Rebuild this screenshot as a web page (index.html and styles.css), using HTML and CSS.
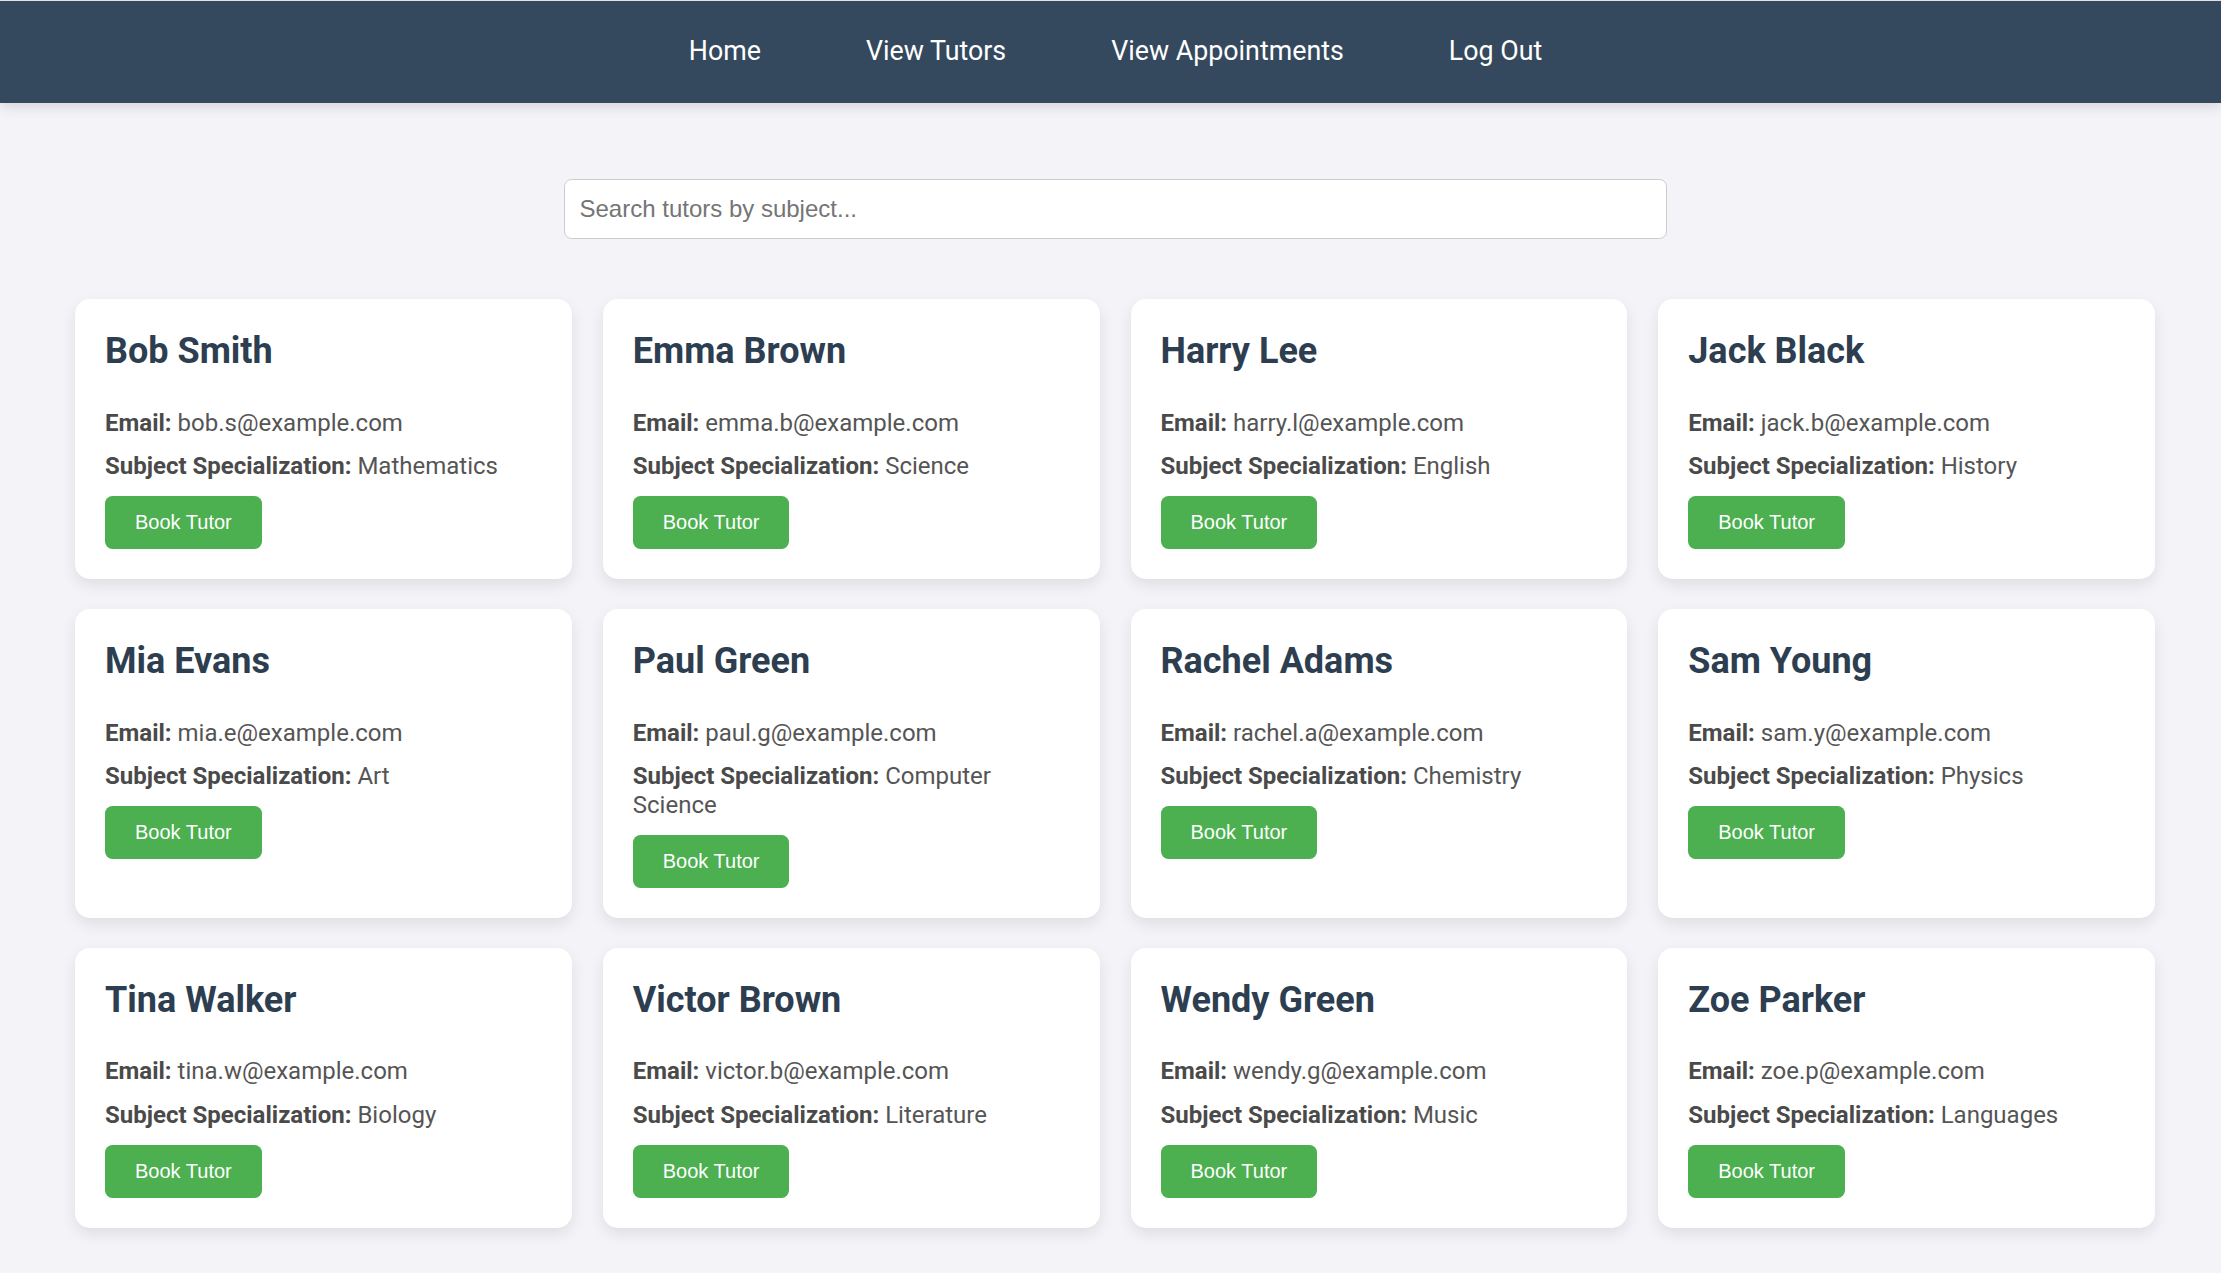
FILE: index.html
```html
<!DOCTYPE html>
<html lang="en">
<head>
<meta charset="utf-8">
<title>View Tutors</title>
<link rel="stylesheet" href="styles.css">
</head>
<body>
<nav class="topnav">
  <div class="nav-inner">
    <a class="nav-link" href="#">Home</a>
    <a class="nav-link" href="#">View Tutors</a>
    <a class="nav-link" href="#">View Appointments</a>
    <a class="nav-link" href="#">Log Out</a>
  </div>
</nav>
<main class="main">
  <div class="search-wrap">
    <input class="search" type="text" placeholder="Search tutors by subject...">
  </div>
  <section class="grid">
    <div class="card"><h2 class="name">Bob Smith</h2><p class="info"><strong>Email:</strong> bob.s@example.com</p><p class="info"><strong>Subject Specialization:</strong> Mathematics</p><button class="book">Book Tutor</button></div>
    <div class="card"><h2 class="name">Emma Brown</h2><p class="info"><strong>Email:</strong> emma.b@example.com</p><p class="info"><strong>Subject Specialization:</strong> Science</p><button class="book">Book Tutor</button></div>
    <div class="card"><h2 class="name">Harry Lee</h2><p class="info"><strong>Email:</strong> harry.l@example.com</p><p class="info"><strong>Subject Specialization:</strong> English</p><button class="book">Book Tutor</button></div>
    <div class="card"><h2 class="name">Jack Black</h2><p class="info"><strong>Email:</strong> jack.b@example.com</p><p class="info"><strong>Subject Specialization:</strong> History</p><button class="book">Book Tutor</button></div>
    <div class="card"><h2 class="name">Mia Evans</h2><p class="info"><strong>Email:</strong> mia.e@example.com</p><p class="info"><strong>Subject Specialization:</strong> Art</p><button class="book">Book Tutor</button></div>
    <div class="card"><h2 class="name">Paul Green</h2><p class="info"><strong>Email:</strong> paul.g@example.com</p><p class="info"><strong>Subject Specialization:</strong> Computer Science</p><button class="book">Book Tutor</button></div>
    <div class="card"><h2 class="name">Rachel Adams</h2><p class="info"><strong>Email:</strong> rachel.a@example.com</p><p class="info"><strong>Subject Specialization:</strong> Chemistry</p><button class="book">Book Tutor</button></div>
    <div class="card"><h2 class="name">Sam Young</h2><p class="info"><strong>Email:</strong> sam.y@example.com</p><p class="info"><strong>Subject Specialization:</strong> Physics</p><button class="book">Book Tutor</button></div>
    <div class="card"><h2 class="name">Tina Walker</h2><p class="info"><strong>Email:</strong> tina.w@example.com</p><p class="info"><strong>Subject Specialization:</strong> Biology</p><button class="book">Book Tutor</button></div>
    <div class="card"><h2 class="name">Victor Brown</h2><p class="info"><strong>Email:</strong> victor.b@example.com</p><p class="info"><strong>Subject Specialization:</strong> Literature</p><button class="book">Book Tutor</button></div>
    <div class="card"><h2 class="name">Wendy Green</h2><p class="info"><strong>Email:</strong> wendy.g@example.com</p><p class="info"><strong>Subject Specialization:</strong> Music</p><button class="book">Book Tutor</button></div>
    <div class="card"><h2 class="name">Zoe Parker</h2><p class="info"><strong>Email:</strong> zoe.p@example.com</p><p class="info"><strong>Subject Specialization:</strong> Languages</p><button class="book">Book Tutor</button></div>
  </section>
</main>
</body>
</html>
```

FILE: styles.css
```css
* { box-sizing: border-box; }

html, body {
  margin: 0;
  padding: 0;
}

body {
  background: #f4f4f8;
  font-family: Roboto, "Liberation Sans", Arial, sans-serif;
  border-top: 1px solid #e2e2e4;
}

.topnav {
  background: #34495e;
  height: 102px;
  box-shadow: 0 4px 12px rgba(0, 0, 0, 0.12);
  position: relative;
}

.nav-inner {
  height: 100%;
  display: flex;
  align-items: center;
  justify-content: center;
  gap: 105px;
  padding-left: 10px;
  padding-bottom: 2px;
}

.nav-link {
  color: #ffffff;
  text-decoration: none;
  font-family: Roboto, sans-serif;
  font-size: 26.8px;
}

.main {
  padding: 0 66px 60px 75px;
}

.search-wrap {
  display: flex;
  justify-content: center;
  padding-top: 76px;
}

.search {
  width: 1103px;
  height: 60px;
  padding: 15px;
  font-family: "Liberation Sans", Arial, sans-serif;
  font-size: 24px;
  border: 1.5px solid #cccccc;
  border-radius: 7.5px;
  background: #ffffff;
  color: #333;
  outline: none;
}

.search::placeholder {
  color: #757575;
}

.grid {
  display: grid;
  grid-template-columns: repeat(4, 1fr);
  column-gap: 31px;
  row-gap: 30px;
  margin-top: 60px;
}

.card {
  background: #ffffff;
  border-radius: 15px;
  padding: 30px;
  box-shadow: 0 6px 15px rgba(0, 0, 0, 0.09);
}

.name {
  margin: 0 0 34.5px;
  font-family: Roboto, sans-serif;
  font-weight: 700;
  font-size: 36px;
  line-height: 1.25;
  color: #2c3e50;
}

.info {
  margin: 15px 0;
  font-family: Roboto, sans-serif;
  font-size: 24px;
  line-height: 1.2;
  color: #555555;
}

.info strong {
  color: #4a4a4a;
  font-weight: 700;
}

.book {
  background: #4caf50;
  color: #ffffff;
  border: none;
  border-radius: 7.5px;
  padding: 15px 30px;
  font-family: "Liberation Sans", Arial, sans-serif;
  font-size: 20px;
  cursor: pointer;
}
```
